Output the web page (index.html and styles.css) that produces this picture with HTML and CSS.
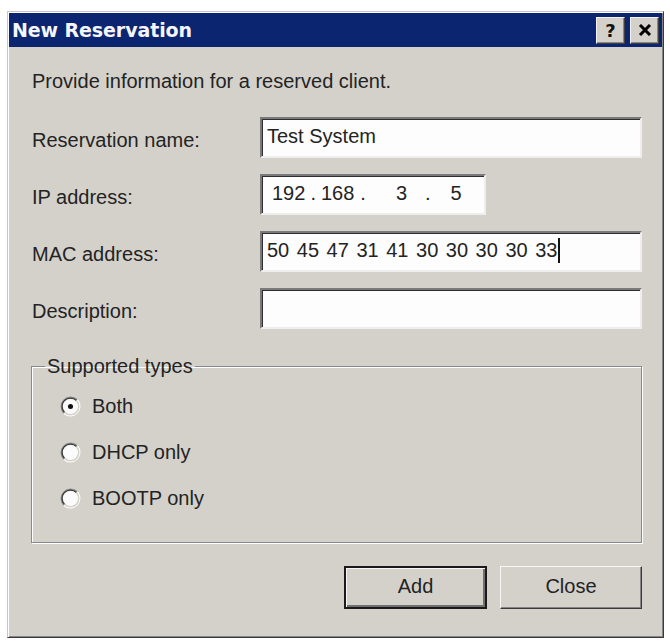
FILE: index.html
```html
<!DOCTYPE html>
<html lang="en">
<head>
<meta charset="utf-8">
<title>New Reservation</title>
<link rel="stylesheet" href="styles.css">
</head>
<body>
<div class="window">
  <div class="titlebar">
    <span class="title">New Reservation</span>
    <div class="tbtns">
      <span class="tbtn help">?</span>
      <span class="tbtn close">
        <svg width="14" height="12" viewBox="0 0 14 12"><path d="M2 1 L12 11 M12 1 L2 11" stroke="#000" stroke-width="3" fill="none"/></svg>
      </span>
    </div>
  </div>
  <div class="content">
    <p class="intro">Provide information for a reserved client.</p>
    <div class="form">
      <label class="lbl">Reservation name:</label>
      <div class="field"><span class="val">Test System</span></div>
      <label class="lbl">IP address:</label>
      <div class="field ip">
        <span class="oct o1">192</span><span class="dot d1">.</span><span class="oct o2">168</span><span class="dot d2">.</span><span class="oct o3">3</span><span class="dot d3">.</span><span class="oct o4">5</span>
      </div>
      <label class="lbl">MAC address:</label>
      <div class="field"><span class="val mac">50 45 47 31 41 30 30 30 30 33</span><span class="caret"></span></div>
      <label class="lbl">Description:</label>
      <div class="field"></div>
    </div>
    <fieldset class="group">
      <legend class="legend">Supported types</legend>
      <div class="radio">
        <svg class="rb" width="21" height="21" viewBox="0 0 20 20">
          <path d="M3.64 16.36 A9 9 0 0 1 16.36 3.64" stroke="#8a8a8a" stroke-width="1.4" fill="none"/>
          <path d="M16.36 3.64 A9 9 0 0 1 3.64 16.36" stroke="#ffffff" stroke-width="1.4" fill="none"/>
          <path d="M4.34 15.66 A8 8 0 0 1 15.66 4.34" stroke="#3c3c3c" stroke-width="1.2" fill="none"/>
          <path d="M15.66 4.34 A8 8 0 0 1 4.34 15.66" stroke="#d4d1cb" stroke-width="1.2" fill="none"/>
          <circle cx="10" cy="10" r="7.2" fill="#fbfbfb"/>
          <circle cx="10" cy="10" r="2.4" fill="#111"/>
        </svg>
        <span>Both</span>
      </div>
      <div class="radio">
        <svg class="rb" width="21" height="21" viewBox="0 0 20 20">
          <path d="M3.64 16.36 A9 9 0 0 1 16.36 3.64" stroke="#8a8a8a" stroke-width="1.4" fill="none"/>
          <path d="M16.36 3.64 A9 9 0 0 1 3.64 16.36" stroke="#ffffff" stroke-width="1.4" fill="none"/>
          <path d="M4.34 15.66 A8 8 0 0 1 15.66 4.34" stroke="#3c3c3c" stroke-width="1.2" fill="none"/>
          <path d="M15.66 4.34 A8 8 0 0 1 4.34 15.66" stroke="#d4d1cb" stroke-width="1.2" fill="none"/>
          <circle cx="10" cy="10" r="7.2" fill="#fbfbfb"/>
        </svg>
        <span>DHCP only</span>
      </div>
      <div class="radio">
        <svg class="rb" width="21" height="21" viewBox="0 0 20 20">
          <path d="M3.64 16.36 A9 9 0 0 1 16.36 3.64" stroke="#8a8a8a" stroke-width="1.4" fill="none"/>
          <path d="M16.36 3.64 A9 9 0 0 1 3.64 16.36" stroke="#ffffff" stroke-width="1.4" fill="none"/>
          <path d="M4.34 15.66 A8 8 0 0 1 15.66 4.34" stroke="#3c3c3c" stroke-width="1.2" fill="none"/>
          <path d="M15.66 4.34 A8 8 0 0 1 4.34 15.66" stroke="#d4d1cb" stroke-width="1.2" fill="none"/>
          <circle cx="10" cy="10" r="7.2" fill="#fbfbfb"/>
        </svg>
        <span>BOOTP only</span>
      </div>
    </fieldset>
    <div class="actions">
      <span class="btn default">Add</span>
      <span class="btn">Close</span>
    </div>
  </div>
</div>
</body>
</html>
```
FILE: styles.css
```css
* { box-sizing: border-box; }
html, body { margin: 0; padding: 0; background: #ffffff; }
body {
  font-family: "Liberation Sans", Arial, sans-serif;
  color: #232323;
  padding-top: 11px;
  padding-left: 7px;
}
.window {
  width: 657px;
  background: #d4d1cb;
  border: 1px solid;
  border-color: #c8c6c2 #3a3a3a #3a3a3a #c8c6c2;
  box-shadow: inset 1px 1px 0 #ffffff, inset -1px -1px 0 #868686;
  padding: 1px;
}
.titlebar {
  height: 34px;
  background: #0c2570;
  display: flex;
  align-items: center;
  justify-content: space-between;
  padding-left: 3px;
  padding-right: 3px;
}
.title {
  font-family: "DejaVu Sans", Verdana, sans-serif;
  font-weight: bold;
  font-size: 19px;
  color: #f4f6fb;
  letter-spacing: -0.1px;
}
.tbtns { display: flex; gap: 5px; }
.tbtn {
  width: 29px;
  height: 27px;
  background: #d4d1cb;
  border: 1px solid;
  border-color: #f2f2f2 #404040 #404040 #f2f2f2;
  box-shadow: inset -1px -1px 0 #868686;
  display: flex;
  align-items: center;
  justify-content: center;
  font-family: "DejaVu Sans", Verdana, sans-serif;
  font-weight: bold;
  font-size: 18px;
  color: #111;
}
.content {
  padding: 22px 20px 27px 22px;
}
.intro {
  margin: 0 0 0 1px;
  font-size: 20px;
  line-height: 24px;
}
.form {
  margin-top: 24px;
  display: grid;
  grid-template-columns: 228px 382px;
  grid-auto-rows: 41px;
  row-gap: 16px;
  padding-left: 1px;
}
.lbl {
  font-size: 20px;
  display: flex;
  align-items: center;
  padding-top: 5px;
}
.field {
  background: #fdfdfd;
  border: 2px solid;
  border-color: #7a7a7a #eeeeee #eeeeee #7a7a7a;
  box-shadow: inset 1px 1px 0 #2e2e2e;
  display: flex;
  align-items: center;
  padding-left: 5px;
  padding-bottom: 3px;
  font-size: 20px;
}
.val { white-space: pre; }
.mac { word-spacing: 2px; }
.caret {
  display: inline-block;
  width: 2px;
  height: 25px;
  background: #111;
  margin-left: 1px;
}
.field.ip {
  width: 226px;
  padding-left: 10px;
}
.oct { display: inline-block; }
.dot { display: inline-block; }
.d1 { margin: 0 5px 0 5px; }
.d2 { margin: 0 0 0 6px; }
.o3 { margin-left: 30px; }
.d3 { margin-left: 18px; }
.o4 { margin-left: 20px; }
.group {
  margin: 26px 0 0 0;
  padding: 6px 0 21px 28px;
  border: 1px solid #8a8a8a;
  box-shadow: 1px 1px 0 #ffffff, inset 1px 1px 0 #ffffff;
  min-width: 0;
}
.legend {
  padding: 0 2px;
  margin-left: -15px;
  font-size: 20px;
  line-height: 22px;
}
.radio {
  height: 46px;
  display: flex;
  align-items: center;
  gap: 11px;
  font-size: 20px;
}
.rb { display: block; }
.actions {
  margin-top: 23px;
  display: flex;
  justify-content: flex-end;
  gap: 13px;
}
.btn {
  width: 142px;
  height: 43px;
  background: #d4d1cb;
  border: 1px solid;
  border-color: #f6f6f6 #3a3a3a #3a3a3a #f6f6f6;
  box-shadow: inset -1px -1px 0 #868686;
  display: flex;
  align-items: center;
  justify-content: center;
  font-size: 20px;
  padding-bottom: 2px;
}
.btn.default {
  width: 143px;
  border: 2px solid #1a1a1a;
  box-shadow: inset 1px 1px 0 #f6f6f6, inset -2px -2px 0 #707070;
}
```
